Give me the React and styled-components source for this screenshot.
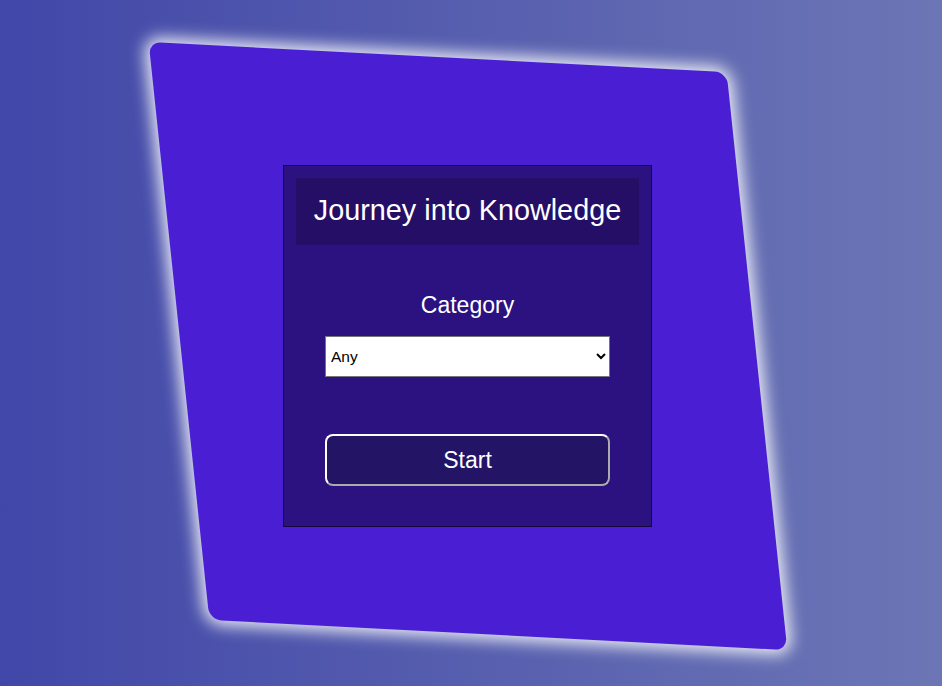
import styled, { createGlobalStyle } from 'styled-components';

const GlobalStyle = createGlobalStyle`
  html, body {
    margin: 0;
    padding: 0;
  }
  body {
    font-family: "Liberation Sans", Arial, sans-serif;
    background: linear-gradient(to right, #4147a8, #6c76b5);
    min-height: 100vh;
    overflow: hidden;
  }
`;

export default function App() {
  return (
    <>
      <GlobalStyle />
      <Page>
        <Stage>
          <Card>
            <Title>Journey into Knowledge</Title>
            <Label htmlFor="category">Category</Label>
            <Select id="category" defaultValue="any">
              <option value="any">Any</option>
              <option value="science">Science</option>
              <option value="history">History</option>
              <option value="geography">Geography</option>
            </Select>
            <StartButton>Start</StartButton>
          </Card>
        </Stage>
      </Page>
    </>
  );
}

const Page = styled.main`
  min-height: 100vh;
  display: flex;
  justify-content: center;
  align-items: center;
  padding: 6px 7px 0 0;
  box-sizing: border-box;
`;

const Stage = styled.section`
  position: relative;
  width: 578px;
  height: 578px;
  display: flex;
  justify-content: center;
  align-items: center;

  &::before {
    content: '';
    position: absolute;
    inset: 0;
    background: #4a1fd4;
    border-radius: 12px;
    transform: skew(6deg, 3deg);
    box-shadow: 0 0 16px 5px rgba(255, 255, 255, 0.88);
  }
`;

const Card = styled.div`
  position: relative;
  width: 369px;
  box-sizing: border-box;
  padding: 12px 12px 40px;
  background: #2c1180;
  border: 1px solid #12063a;
  display: flex;
  flex-direction: column;
  align-items: center;
`;

const Title = styled.h1`
  margin: 0;
  width: 100%;
  height: 67px;
  box-sizing: border-box;
  padding-bottom: 3px;
  display: flex;
  justify-content: center;
  align-items: center;
  background: #240e66;
  color: #fff;
  font-size: 28.8px;
  font-weight: 400;
`;

const Label = styled.label`
  margin-top: 47px;
  color: #fff;
  font-size: 23px;
  line-height: 26px;
`;

const Select = styled.select`
  margin-top: 18px;
  width: 285px;
  height: 41px;
  font-family: "Liberation Sans", Arial, sans-serif;
  font-size: 15.5px;
  color: #000;
  background-color: #fff;
  border: 1px solid #767676;
  border-radius: 0;
  padding: 0 1px;
`;

const StartButton = styled.button`
  margin-top: 57px;
  width: 285px;
  height: 52px;
  background: #231466;
  color: #fff;
  font-family: "Liberation Sans", Arial, sans-serif;
  font-size: 23px;
  border: 2px outset #ffffff;
  border-radius: 8px;
  cursor: pointer;
`;
